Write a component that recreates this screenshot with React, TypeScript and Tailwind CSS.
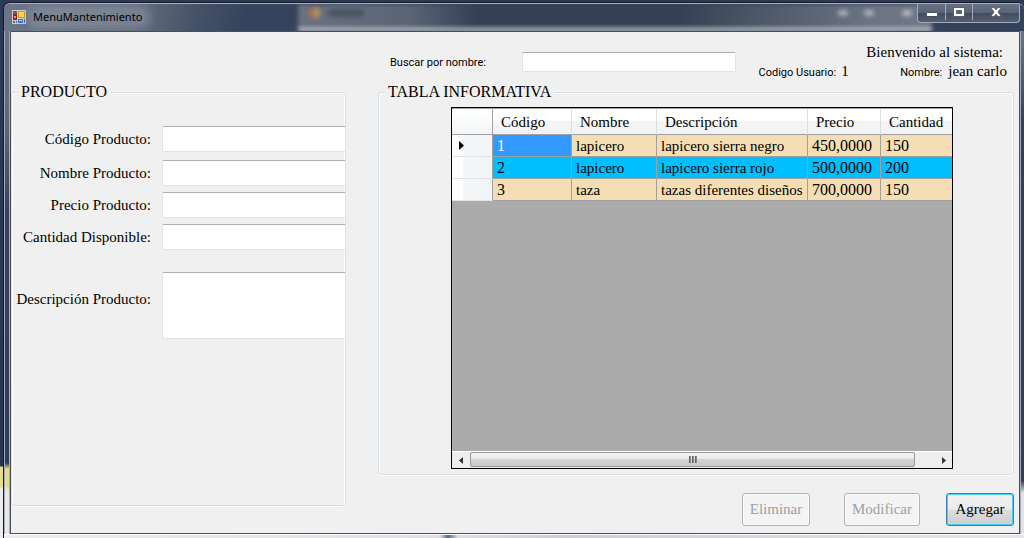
import React from "react";

const products = [
  { code: "1", name: "lapicero", description: "lapicero sierra negro", price: "450,0000", stock: "150" },
  { code: "2", name: "lapicero", description: "lapicero sierra rojo", price: "500,0000", stock: "200" },
  { code: "3", name: "taza", description: "tazas diferentes diseños", price: "700,0000", stock: "150" },
];

const fields = [
  { id: "codigo", label: "Código Producto:", row: "mb-2" },
  { id: "nombre", label: "Nombre Producto:", row: "mb-1.5" },
  { id: "precio", label: "Precio Producto:", row: "mb-1.5" },
  { id: "cantidad", label: "Cantidad Disponible:", row: "mb-[22px]" },
];

const inputStyle =
  "rounded-[2px] border border-[#e2e3ea] border-t-[#abadb3] bg-white px-1 outline-none";
const groupStyle =
  "min-w-0 rounded-[3px] border border-[#d5dfe5] shadow-[inset_1px_1px_0_#fff,inset_-1px_0_0_#fff,0_1px_0_#fff]";
const legendStyle = "ml-[6px] bg-[#f0f0f0] px-[3px] text-[16px] leading-[18px]";

function AppIcon() {
  return (
    <svg width="14" height="14" viewBox="0 0 14 14" aria-hidden="true">
      <rect width="14" height="14" fill="#c9ccd2" />
      <rect x="1" y="1" width="4" height="3" fill="#5a6270" />
      <rect x="1" y="4" width="4" height="6" fill="#a31818" />
      <rect x="2" y="6" width="2" height="2" fill="#f08a7a" />
      <rect x="6" y="1" width="7" height="7" fill="#d89a10" />
      <rect x="7" y="2" width="5" height="5" fill="#ffd75a" />
      <rect x="1" y="11" width="2" height="2" fill="#626a78" />
      <rect x="4" y="11" width="1" height="2" fill="#626a78" />
      <rect x="6" y="9" width="5" height="4" fill="#3c78d8" />
      <rect x="7" y="10" width="3" height="1" fill="#9cc4ff" />
      <rect x="12" y="9" width="1" height="4" fill="#626a78" />
    </svg>
  );
}

function TitleBar() {
  return (
    <header className="relative flex h-7 shrink-0 items-start justify-between overflow-hidden rounded-t-[6px] border-t border-[#aab0ba] bg-[linear-gradient(100deg,#6c7688_0px,#5a6577_150px,#465267_190px,#36435d_240px,#35425c_100%)] pr-1">
      <div
        className="absolute top-0 right-[92px] bottom-0 left-[294px] border-b-[3px] border-[#d8dade] bg-[linear-gradient(90deg,#6a7282_0%,#596475_18%,#354153_28%,#354153_60%,#4b5666_72%,#6b7484_90%,#727988_100%)] blur-[2px]"
        aria-hidden="true"
      >
        <div className="flex items-center gap-2 pt-1 pl-2.5">
          <span className="h-2.5 w-3 rounded bg-[linear-gradient(90deg,#9a625a,#bfa35c)]" />
          <span className="h-2 w-9 rounded bg-[#4a5463]" />
          <span className="ml-auto h-1.5 w-2.5 rounded bg-[#a9aeb8]" />
          <span className="ml-2 h-1.5 w-2.5 rounded bg-[#a9aeb8]" />
          <span className="mr-5 ml-5 h-1.5 w-2.5 rounded bg-[#b4b8c0]" />
        </div>
      </div>
      <div className="relative flex h-full items-center gap-1.5 pb-px pl-2">
        <AppIcon />
        <h1 className="rounded-full bg-[#8a92a0]/60 pr-1 pl-px font-['Noto_Sans','Open_Sans',sans-serif] text-[11px] leading-4 text-black shadow-[0_0_8px_5px_rgba(138,146,160,0.6)]">
          MenuMantenimiento
        </h1>
      </div>
      <div className="relative flex h-[19px] rounded-b-[4px] border border-t-0 border-[#a3aab6] bg-[linear-gradient(#677184_0%,#5a6478_48%,#414c61_52%,#566075_100%)] pb-0.5">
        <button aria-label="Minimizar" className="flex w-7 items-center justify-center border-r border-[#a3aab6]">
          <svg width="12" height="5" viewBox="0 0 12 5" aria-hidden="true" className="mt-1">
            <rect x="0.5" y="0.5" width="11" height="4" rx="1" fill="#fff" stroke="#454c58" />
          </svg>
        </button>
        <button aria-label="Maximizar" className="flex w-[27px] items-center justify-center border-r border-[#a3aab6]">
          <svg width="12" height="10" viewBox="0 0 12 10" aria-hidden="true">
            <path d="M.5 .5h11v9H.5zM3.500 3.500v3h5v-3z" fill="#fff" fillRule="evenodd" stroke="#454c58" strokeWidth="0.8" />
          </svg>
        </button>
        <button aria-label="Cerrar" className="flex w-[46px] items-center justify-center">
          <svg width="12" height="10" viewBox="0 0 12 10" aria-hidden="true">
            <path d="M.6 .6h3.600L6 2.800 7.800 .6h3.600L7.900 5l3.500 4.400H7.800L6 7.200 4.200 9.400H.6L4.100 5z" fill="#fff" stroke="#454c58" strokeWidth="0.8" />
          </svg>
        </button>
      </div>
    </header>
  );
}

function ProductPanel() {
  const label = "w-[139px] shrink-0 text-right leading-[18px] whitespace-nowrap";
  return (
    <fieldset className={`${groupStyle} flex-1`}>
      <legend className={legendStyle}>PRODUCTO</legend>
      <form className="-mr-px flex flex-col pt-[25px]">
        {fields.map((f) => (
          <div key={f.id} className={`flex items-center ${f.row}`}>
            <label htmlFor={f.id} className={label}>
              {f.label}
            </label>
            <input id={f.id} type="text" className={`${inputStyle} ml-[11px] h-[26px] min-w-0 flex-1`} />
          </div>
        ))}
        <div className="flex items-start">
          <label htmlFor="descripcion" className={`${label} pt-[18px]`}>
            Descripción Producto:
          </label>
          <textarea id="descripcion" className={`${inputStyle} ml-[11px] h-[67px] min-w-0 flex-1 resize-none`} />
        </div>
      </form>
    </fieldset>
  );
}

function ProductTable() {
  const headers = ["Código", "Nombre", "Descripción", "Precio", "Cantidad"];
  const headCell =
    "h-[26px] border-r border-b border-r-[#dedfe1] border-b-[#a0a0a0] bg-[linear-gradient(#fff_0%,#fff_45%,#f4f5f7_50%,#f1f2f4_100%)] p-0 pl-2 text-left font-normal last:border-r-0";
  const cell = "h-[22px] border-r border-b border-[#a0a0a0] p-0 pl-1 last:border-r-0";
  const numeric = `${cell} text-[16px]`;
  return (
    <div className="mt-1.5 mr-[60px] mb-[5px] ml-[72px] flex flex-1 flex-col overflow-hidden border border-black bg-[#ababab]">
      <table className="w-full table-fixed border-separate border-spacing-0 border-t border-[#a0a0a0] leading-[18px] whitespace-nowrap">
        <colgroup>
          <col className="w-[41px]" />
          <col className="w-[79px]" />
          <col className="w-[85px]" />
          <col className="w-[151px]" />
          <col className="w-[73px]" />
          <col />
        </colgroup>
        <thead>
          <tr>
            <th aria-label="Fila" className="border-r border-b border-[#a0a0a0] bg-[linear-gradient(#fff_0%,#fafbfc_45%,#f4f5f7_100%)] p-0" />
            {headers.map((h) => (
              <th key={h} scope="col" className={headCell}>
                {h}
              </th>
            ))}
          </tr>
        </thead>
        <tbody>
          {products.map((p, i) => (
            <tr key={p.code} className={i === 1 ? "bg-[#00bfff]" : "bg-[#f5deb3]"}>
              <th scope="row" aria-label={`Fila ${p.code}`} className="border-r border-b border-r-[#a0a0a0] border-b-[#e2e3e5] bg-[linear-gradient(90deg,#fff_0%,#fff_25%,#f5f6f8_30%,#f3f4f7_100%)] p-0 pl-[7px]">
                {i === 0 && (
                  <svg width="5" height="9" viewBox="0 0 5 9" aria-hidden="true">
                    <path d="M0 0l5 4.500L0 9z" fill="#000" />
                  </svg>
                )}
              </th>
              <td className={i === 0 ? `${numeric} bg-[#3399ff] text-white` : numeric}>{p.code}</td>
              <td className={cell}>{p.name}</td>
              <td className={cell}>{p.description}</td>
              <td className={numeric}>{p.price}</td>
              <td className={numeric}>{p.stock}</td>
            </tr>
          ))}
        </tbody>
      </table>
      <div className="mt-auto flex h-[17px] shrink-0 border-t border-white bg-[#eeeeee]">
        <button aria-label="Desplazar a la izquierda" className="flex w-[18px] items-center justify-center">
          <svg width="4" height="7" viewBox="0 0 4 7" aria-hidden="true">
            <path d="M4 0v7L0 3.500z" fill="#333" />
          </svg>
        </button>
        <div className="flex flex-1">
          <div className="mb-px flex flex-1 items-center justify-center gap-px rounded-[2px] border border-[#979797] bg-[linear-gradient(#f5f5f5_0%,#e9e9eb_45%,#d2d3d5_50%,#c8c9cb_100%)]">
            <span className="h-[7px] w-0.5 bg-[linear-gradient(90deg,#555,#999)]" />
            <span className="h-[7px] w-0.5 bg-[linear-gradient(90deg,#555,#999)]" />
            <span className="h-[7px] w-0.5 bg-[linear-gradient(90deg,#555,#999)]" />
          </div>
          <div className="w-5" />
        </div>
        <button aria-label="Desplazar a la derecha" className="flex w-[17px] items-center justify-center">
          <svg width="4" height="7" viewBox="0 0 4 7" aria-hidden="true">
            <path d="M0 0v7l4-3.500z" fill="#333" />
          </svg>
        </button>
      </div>
    </div>
  );
}

function SearchHeader() {
  const small = "font-['Roboto','Liberation_Sans',sans-serif] text-[11px]";
  return (
    <div className="flex h-[51px] shrink-0 justify-between pl-3">
      <div className="flex items-start pt-5">
        <label htmlFor="buscar" className={`${small} w-[132px] leading-[22px] whitespace-nowrap`}>
          Buscar por nombre:
        </label>
        <input id="buscar" type="text" className={`${inputStyle} h-5 w-[214px]`} />
      </div>
      <div className="flex flex-col items-end pt-2.5 whitespace-nowrap">
        <p className="pr-[11px] leading-5">Bienvenido al sistema:</p>
        <p className="flex items-baseline pr-[7px] leading-[18px]">
          <span className={small}>Codigo Usuario:</span>
          <span className="ml-1 w-[60px] pl-px">1</span>
          <span className={small}>Nombre:</span>
          <span className="ml-1.5">jean carlo</span>
        </p>
      </div>
    </div>
  );
}

export default function App() {
  const disabledButton =
    "h-[33px] rounded-[3px] border border-[#adb2b5] bg-[#f4f4f4] text-[#a0a0a0] shadow-[inset_0_0_0_1px_#fcfcfc]";
  return (
    <div className="flex min-h-screen w-full bg-[#2a3956] font-['Liberation_Serif','Times_New_Roman',serif] text-[15px] text-black">
      <div className="w-[3px] shrink-0 bg-[linear-gradient(#2b3a59_0px,#263554_466px,#e8dc8c_467px,#e8dc8c_487px,#ececec_488px)]" />
      <div className="flex min-w-0 flex-1 flex-col pt-0.5">
        <div className="flex min-w-0 flex-1 flex-col rounded-t-[7px] border-t border-l border-[#171c26]">
          <TitleBar />
          <div className="flex flex-1">
            <div className="w-1.5 shrink-0 border-x border-[#a5acb8] bg-[linear-gradient(#687386_0px,#5b6679_100px,#35435e_180px,#2f3e5b_432px,#e5da92_438px,#e5da92_454px,#e9e9ea_462px)]" />
            <main className="flex min-w-0 flex-1 border border-[#4b4e55] bg-[#f0f0f0]">
              <div className="flex w-[335px] shrink-0 flex-col pt-[51px] pb-[27px]">
                <ProductPanel />
              </div>
              <div className="ml-8 flex min-w-0 flex-1 flex-col pr-[5px]">
                <SearchHeader />
                <fieldset className={`${groupStyle} flex flex-1 flex-col`}>
                  <legend className={legendStyle}>TABLA INFORMATIVA</legend>
                  <ProductTable />
                </fieldset>
                <div className="flex shrink-0 justify-end pt-[18px] pb-[7px]">
                  <button disabled className={`${disabledButton} mr-[34px] w-[68px]`}>
                    Eliminar
                  </button>
                  <button disabled className={`${disabledButton} mr-[26px] w-[76px]`}>
                    Modificar
                  </button>
                  <button className="h-[33px] w-[68px] rounded-[3px] border border-[#3c7fb1] bg-[linear-gradient(#f2f2f2_0%,#ebebeb_48%,#dcdcdc_52%,#cfcfcf_100%)] shadow-[inset_0_0_0_1px_#48cdf5]">
                    Agregar
                  </button>
                </div>
              </div>
            </main>
            <div className="w-1 shrink-0 border-l border-[#a5acb8] bg-[linear-gradient(#687386_0px,#4f5b70_50px,#33415c_90px,#2f3e5b_450px,#e4e4e8_462px)]" />
          </div>
          <div className="h-1 shrink-0 border-t border-white bg-[linear-gradient(90deg,#ececee_0px,#e0e0e4_420px,#dcdce1_436px,#5c6684_444px,#dedee2_454px,#cdcdd2_560px,#e6e6e8_100%)]" />
        </div>
      </div>
    </div>
  );
}
